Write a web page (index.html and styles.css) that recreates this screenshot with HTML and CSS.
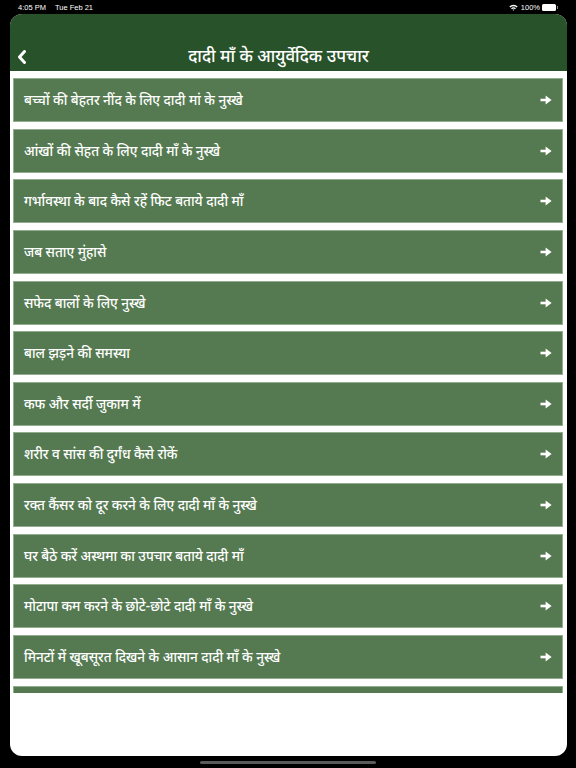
FILE: index.html
```html
<!DOCTYPE html>
<html lang="hi">
<head>
<meta charset="utf-8">
<title>दादी माँ के आयुर्वेदिक उपचार</title>
<link rel="stylesheet" href="styles.css">
</head>
<body>
<div class="screen">
  <div class="status">
    <div class="status-left"><span>4:05 PM</span><span class="date">Tue Feb 21</span></div>
    <div class="status-right">
      <svg class="wifi" width="9" height="7" viewBox="0 0 8 6"><path d="M0.3 2.2 A5.2 5.2 0 0 1 7.7 2.2 L6.8 3.1 A4 4 0 0 0 1.2 3.1 Z M1.8 3.7 A3 3 0 0 1 6.2 3.7 L5.3 4.6 A1.8 1.8 0 0 0 2.7 4.6 Z M3.2 5.1 A1.2 1.2 0 0 1 4.8 5.1 L4 5.9 Z" fill="#fff"/></svg>
      <span>100%</span>
      <span class="battery"></span><span class="battery-cap"></span>
    </div>
  </div>
  <div class="frame">
    <header class="header">
      <svg class="back" width="10" height="14" viewBox="0 0 10 14"><path d="M7.5 1.5 L2.5 7 L7.5 12.5" fill="none" stroke="#fff" stroke-width="3" stroke-linecap="round" stroke-linejoin="round"/></svg>
      <h1 class="title">दादी माँ के आयुर्वेदिक उपचार</h1>
    </header>
    <div class="list">
      <div class="item"><span>बच्चों की बेहतर नींद के लिए दादी मां के नुस्खे</span><svg class="arrow" width="12" height="10" viewBox="0 0 12 10"><path d="M0.5 5 H7.5" stroke="#fff" stroke-width="2.6"/><path d="M5.6 0.6 L11.6 5 L5.6 9.4 Z" fill="#fff"/></svg></div>
      <div class="item"><span>आंखों की सेहत के लिए दादी माँ के नुस्खे</span><svg class="arrow" width="12" height="10" viewBox="0 0 12 10"><path d="M0.5 5 H7.5" stroke="#fff" stroke-width="2.6"/><path d="M5.6 0.6 L11.6 5 L5.6 9.4 Z" fill="#fff"/></svg></div>
      <div class="item"><span>गर्भावस्था के बाद कैसे रहें फिट बताये दादी माँ</span><svg class="arrow" width="12" height="10" viewBox="0 0 12 10"><path d="M0.5 5 H7.5" stroke="#fff" stroke-width="2.6"/><path d="M5.6 0.6 L11.6 5 L5.6 9.4 Z" fill="#fff"/></svg></div>
      <div class="item"><span>जब सताए मुंहासे</span><svg class="arrow" width="12" height="10" viewBox="0 0 12 10"><path d="M0.5 5 H7.5" stroke="#fff" stroke-width="2.6"/><path d="M5.6 0.6 L11.6 5 L5.6 9.4 Z" fill="#fff"/></svg></div>
      <div class="item"><span>सफेद बालों के लिए नुस्खे</span><svg class="arrow" width="12" height="10" viewBox="0 0 12 10"><path d="M0.5 5 H7.5" stroke="#fff" stroke-width="2.6"/><path d="M5.6 0.6 L11.6 5 L5.6 9.4 Z" fill="#fff"/></svg></div>
      <div class="item"><span>बाल झड़ने की समस्या</span><svg class="arrow" width="12" height="10" viewBox="0 0 12 10"><path d="M0.5 5 H7.5" stroke="#fff" stroke-width="2.6"/><path d="M5.6 0.6 L11.6 5 L5.6 9.4 Z" fill="#fff"/></svg></div>
      <div class="item"><span>कफ और सर्दी जुकाम में</span><svg class="arrow" width="12" height="10" viewBox="0 0 12 10"><path d="M0.5 5 H7.5" stroke="#fff" stroke-width="2.6"/><path d="M5.6 0.6 L11.6 5 L5.6 9.4 Z" fill="#fff"/></svg></div>
      <div class="item"><span>शरीर व सांस की दुर्गंध कैसे रोकें</span><svg class="arrow" width="12" height="10" viewBox="0 0 12 10"><path d="M0.5 5 H7.5" stroke="#fff" stroke-width="2.6"/><path d="M5.6 0.6 L11.6 5 L5.6 9.4 Z" fill="#fff"/></svg></div>
      <div class="item"><span>रक्त कैंसर को दूर करने के लिए दादी माँ के नुस्खे</span><svg class="arrow" width="12" height="10" viewBox="0 0 12 10"><path d="M0.5 5 H7.5" stroke="#fff" stroke-width="2.6"/><path d="M5.6 0.6 L11.6 5 L5.6 9.4 Z" fill="#fff"/></svg></div>
      <div class="item"><span>घर बैठे करें अस्थमा का उपचार बताये दादी माँ</span><svg class="arrow" width="12" height="10" viewBox="0 0 12 10"><path d="M0.5 5 H7.5" stroke="#fff" stroke-width="2.6"/><path d="M5.6 0.6 L11.6 5 L5.6 9.4 Z" fill="#fff"/></svg></div>
      <div class="item"><span>मोटापा कम करने के छोटे-छोटे दादी माँ के नुस्खे</span><svg class="arrow" width="12" height="10" viewBox="0 0 12 10"><path d="M0.5 5 H7.5" stroke="#fff" stroke-width="2.6"/><path d="M5.6 0.6 L11.6 5 L5.6 9.4 Z" fill="#fff"/></svg></div>
      <div class="item"><span>मिनटों में खूबसूरत दिखने के आसान दादी माँ के नुस्खे</span><svg class="arrow" width="12" height="10" viewBox="0 0 12 10"><path d="M0.5 5 H7.5" stroke="#fff" stroke-width="2.6"/><path d="M5.6 0.6 L11.6 5 L5.6 9.4 Z" fill="#fff"/></svg></div>
      <div class="item item-partial"></div>
    </div>
  </div>
  <div class="home-bar"><span class="home-indicator"></span></div>
</div>
</body>
</html>
```

FILE: styles.css
```css
* { box-sizing: border-box; }
html, body { margin: 0; padding: 0; background: #000; }
body { width: 576px; height: 768px; overflow: hidden; font-family: "Noto Sans", "Liberation Sans", sans-serif; }
.screen { width: 576px; height: 768px; display: flex; flex-direction: column; }
.status { height: 14px; display: flex; justify-content: space-between; align-items: center; padding: 1px 18px 0 18px; color: #fff; font-family: "Liberation Sans", sans-serif; font-size: 7.5px; }
.status-left .date { margin-left: 9px; }
.status-right { display: flex; align-items: center; gap: 2px; }
.wifi { margin-right: 1px; }
.battery { width: 14px; height: 6.5px; border-radius: 1.5px; background: #fff; display: inline-block; }
.battery-cap { width: 1px; height: 2.5px; background: #888; display: inline-block; margin-left: -1px; }
.frame { margin: 0 9px 0 10px; height: 742px; background: #fff; border-radius: 12px; overflow: hidden; display: flex; flex-direction: column; }
.header { height: 57px; background: #28532a; display: flex; align-items: flex-end; position: relative; padding: 0 20px 4px 0; }
.back { position: absolute; left: 7px; bottom: 7px; }
.title { margin: 0 auto; color: #fff; font-weight: 500; font-size: 17px; line-height: 22px; }
.list { height: 622px; overflow: hidden; padding: 7px 4px 0 3px; display: flex; flex-direction: column; gap: 6.65px; }
.item { flex: 0 0 44px; height: 44px; background: #557a51; border: 1px solid #93ae8f; display: flex; align-items: center; justify-content: space-between; padding: 0 10px 0 10px; color: #fff; font-size: 13.5px; font-weight: 500; }
.item span { line-height: 20px; }
.arrow { display: block; }
.home-bar { flex: 1; display: flex; align-items: center; justify-content: center; }
.home-indicator { width: 176px; height: 3px; border-radius: 2px; background: #5a5a5a; }
```
